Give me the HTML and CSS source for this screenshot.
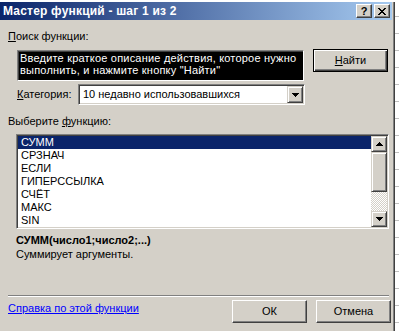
FILE: index.html
```html
<!DOCTYPE html>
<html lang="ru">
<head>
    <meta charset="UTF-8">
    <title>Мастер функций - шаг 1 из 2</title>
    <link rel="stylesheet" href="styles.css">
</head>
<body>
    <div class="window">
        <div class="titlebar">
            <span class="title">Мастер функций - шаг 1 из 2</span>
            <div class="caption-buttons">
                <span class="cap-btn help">?</span>
                <span class="cap-btn close">
                    <svg width="8" height="7" viewBox="0 0 8 7" shape-rendering="crispEdges"><path d="M0 0h2v1H0zM6 0h2v1H6zM1 1h2v1H1zM5 1h2v1H5zM2 2h4v1H2zM3 3h2v1H3zM2 4h4v1H2zM1 5h2v1H1zM5 5h2v1H5zM0 6h2v1H0zM6 6h2v1H6z"/></svg>
                </span>
            </div>
        </div>

        <div class="content">
            <div class="label"><u>П</u>оиск функции:</div>

            <div class="search-row">
                <div class="search-box">
                    <div class="search-text">Введите краткое описание действия, которое нужно<br>выполнить, и нажмите кнопку "Найти"</div>
                </div>
                <button class="btn default"><u>Н</u>айти</button>
            </div>

            <div class="category-row">
                <span class="label"><u>К</u>атегория:</span>
                <div class="combo">
                    <span class="combo-value">10 недавно использовавшихся</span>
                    <span class="arrow-btn">
                        <svg width="7" height="4" viewBox="0 0 7 4" shape-rendering="crispEdges"><path d="M0 0h7v1H0zM1 1h5v1H1zM2 2h3v1H2zM3 3h1v1H3z"/></svg>
                    </span>
                </div>
            </div>

            <div class="label choose">Выберите <u>ф</u>ункцию:</div>

            <div class="listbox">
                <ul class="items">
                    <li class="selected">СУММ</li>
                    <li>СРЗНАЧ</li>
                    <li>ЕСЛИ</li>
                    <li>ГИПЕРССЫЛКА</li>
                    <li>СЧЁТ</li>
                    <li>МАКС</li>
                    <li>SIN</li>
                </ul>
                <div class="scrollbar">
                    <span class="arrow-btn">
                        <svg width="7" height="4" viewBox="0 0 7 4" shape-rendering="crispEdges"><path d="M3 0h1v1H3zM2 1h3v1H2zM1 2h5v1H1zM0 3h7v1H0z"/></svg>
                    </span>
                    <span class="thumb"></span>
                    <span class="track"></span>
                    <span class="arrow-btn">
                        <svg width="7" height="4" viewBox="0 0 7 4" shape-rendering="crispEdges"><path d="M0 0h7v1H0zM1 1h5v1H1zM2 2h3v1H2zM3 3h1v1H3z"/></svg>
                    </span>
                </div>
            </div>

            <div class="signature">СУММ(число1;число2;...)</div>
            <div class="description">Суммирует аргументы.</div>

            <div class="separator"></div>

            <div class="footer">
                <a class="help-link" href="#">Справка по этой функции</a>
                <button class="btn">ОК</button>
                <button class="btn">Отмена</button>
            </div>
        </div>
    </div>
</body>
</html>
```

FILE: styles.css
```css
body {
    margin: 0;
    overflow: hidden;
    background-color: #fff;
    background-image: repeating-linear-gradient(to bottom, transparent 0 16px, #c0c0c0 16px 17px);
    font-family: "Liberation Sans", Arial, sans-serif;
    font-size: 11px;
    line-height: 13px;
    color: #000;
}

.window {
    width: 394px;
    height: 329px;
    margin-top: 2px;
    background: #d4d0c8;
    border-right: 1px solid #404040;
    box-shadow: inset -1px 0 #808080;
}

.titlebar {
    display: flex;
    align-items: center;
    justify-content: space-between;
    height: 18px;
    margin-right: 2px;
    padding-left: 3px;
    padding-right: 2px;
    background: linear-gradient(to right, #0a246a, #a6caf0);
}

.title {
    color: #fff;
    font-weight: bold;
    font-size: 12px;
    letter-spacing: 0.2px;
}

.caption-buttons {
    display: flex;
}

.cap-btn {
    display: flex;
    align-items: center;
    justify-content: center;
    width: 14px;
    height: 12px;
    background: #d4d0c8;
    border: 1px solid;
    border-color: #fff #404040 #404040 #fff;
    box-shadow: inset -1px -1px #808080;
}

.cap-btn.help {
    margin-right: 2px;
    font-weight: bold;
    font-size: 11px;
}

.content {
    padding: 10px 0 0 8px;
}

u {
    text-decoration: underline;
}

.search-row {
    display: flex;
    align-items: flex-start;
    margin-top: 6px;
}

.search-box {
    width: 284px;
    height: 28px;
    margin: 1px 0 0 9px;
    padding: 0 0 1px 1px;
    background: #fff;
    border: 1px solid;
    border-color: #808080 #fff #fff #808080;
    box-shadow: inset 1px 1px #404040, inset -1px -1px #d4d0c8;
}

.search-text {
    height: 100%;
    margin-top: 1px;
    padding-left: 1px;
    background: #000;
    color: #fff;
    line-height: 12px;
    letter-spacing: 0.2px;
    white-space: nowrap;
    overflow: hidden;
}

.btn {
    width: 75px;
    height: 23px;
    padding: 0;
    font: inherit;
    color: #000;
    background: #d4d0c8;
    border: 1px solid;
    border-color: #fff #404040 #404040 #fff;
    box-shadow: inset -1px -1px #808080;
}

.btn.default {
    margin-left: 9px;
    border-color: #000;
    box-shadow: inset 1px 1px #fff, inset -1px -1px #404040, inset -2px -2px #808080;
}

.category-row {
    display: flex;
    align-items: center;
    margin-top: 3px;
    padding-left: 9px;
}

.category-row .label {
    width: 61px;
}

.combo {
    display: flex;
    align-items: center;
    justify-content: space-between;
    width: 223px;
    height: 17px;
    background: #fff;
    border: 1px solid;
    border-color: #808080 #fff #fff #808080;
    box-shadow: inset 1px 1px #404040, inset -1px -1px #d4d0c8;
    padding: 1px;
}

.combo-value {
    padding-left: 3px;
}

.arrow-btn {
    display: flex;
    align-items: center;
    justify-content: center;
    box-sizing: border-box;
    width: 16px;
    height: 17px;
    background: #d4d0c8;
    border: 1px solid;
    border-color: #d4d0c8 #404040 #404040 #d4d0c8;
    box-shadow: inset 1px 1px #fff, inset -1px -1px #808080;
}

.choose {
    margin-top: 10px;
}

.listbox {
    display: flex;
    width: 369px;
    height: 91px;
    margin: 6px 0 0 8px;
    background: #fff;
    border: 1px solid;
    border-color: #808080 #fff #fff #808080;
    box-shadow: inset 1px 1px #404040, inset -1px -1px #d4d0c8;
    padding: 1px;
}

.items {
    flex: 1;
    margin: 0;
    padding: 0;
    list-style: none;
}

.items li {
    height: 13px;
    padding-left: 3px;
}

.items li.selected {
    background: #0a246a;
    color: #fff;
}

.scrollbar {
    display: flex;
    flex-direction: column;
    width: 16px;
}

.scrollbar .arrow-btn {
    height: 16px;
}

.thumb {
    box-sizing: border-box;
    height: 40px;
    background: #d4d0c8;
    border: 1px solid;
    border-color: #d4d0c8 #404040 #404040 #d4d0c8;
    box-shadow: inset 1px 1px #fff, inset -1px -1px #808080;
}

.track {
    flex: 1;
    background: repeating-conic-gradient(#fff 0 25%, #d4d0c8 0 50%) 0 0 / 2px 2px;
}

.signature {
    margin: 5px 0 0 8px;
    font-weight: bold;
}

.description {
    margin: 1px 0 0 8px;
}

.separator {
    width: 381px;
    height: 0;
    margin-top: 34px;
    border-top: 1px solid #808080;
    border-bottom: 1px solid #fff;
}

.footer {
    display: flex;
    align-items: flex-start;
    gap: 9px;
    margin-top: 3px;
}

.help-link {
    margin-top: 2px;
    margin-right: auto;
    color: #0000ff;
    text-decoration: underline;
}

.footer .btn:last-child {
    margin-right: 3px;
}
```
